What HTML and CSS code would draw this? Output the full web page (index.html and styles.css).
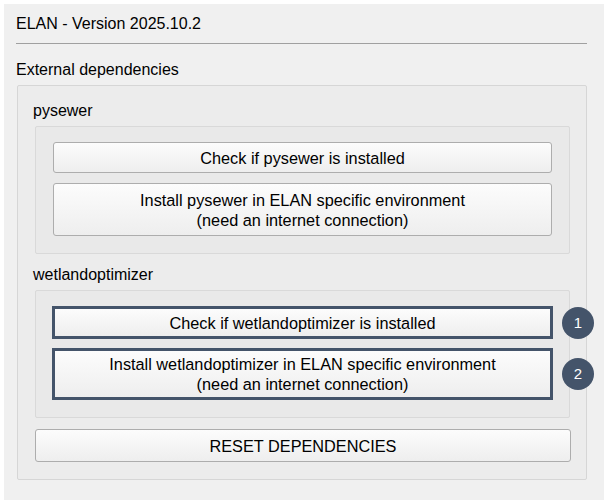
FILE: index.html
```html
<!DOCTYPE html>
<html>
<head>
<meta charset="utf-8">
<link rel="stylesheet" href="styles.css">
</head>
<body>
<div class="frame">
  <div class="title">ELAN - Version 2025.10.2</div>
  <div class="rule"></div>
  <div class="label top-label">External dependencies</div>
  <div class="group">
    <div class="label">pysewer</div>
    <div class="inner">
      <button class="btn single">Check if pysewer is installed</button>
      <button class="btn double">Install pysewer in ELAN specific environment<br>(need an internet connection)</button>
    </div>
    <div class="label sub-label">wetlandoptimizer</div>
    <div class="inner">
      <button class="btn single hl">Check if wetlandoptimizer is installed<span class="badge">1</span></button>
      <button class="btn double hl">Install wetlandoptimizer in ELAN specific environment<br>(need an internet connection)<span class="badge">2</span></button>
    </div>
    <button class="btn single reset">RESET DEPENDENCIES</button>
  </div>
</div>
</body>
</html>
```

FILE: styles.css
```css
html, body {
  margin: 0;
  padding: 0;
  background: #ffffff;
}
body {
  font-family: "Liberation Sans", Arial, sans-serif;
  font-size: 16px;
  color: #000;
}
.frame {
  margin: 4px;
  width: 600px;
  height: 496px;
  box-sizing: border-box;
  background: #f0f0f0;
  padding: 10px 17px 0 12px;
}
.title {
  line-height: 20px;
  height: 20px;
}
.rule {
  margin-top: 9px;
  height: 1px;
  background: #a0a0a0;
}
.label {
  line-height: 20px;
  height: 20px;
}
.top-label {
  margin-top: 16px;
}
.group {
  margin: 5px 0 0 1px;
  border: 1px solid #d6d6d6;
  border-radius: 2px;
  background: #ececec;
  padding: 15px 16px 17px 15px;
}
.inner {
  margin: 5px 0 0 2px;
  border: 1px solid #d9d9d9;
  border-radius: 2px;
  background: #e9e9e9;
  padding: 15px 17px 17px 17px;
  display: flex;
  flex-direction: column;
  gap: 10px;
}
.sub-label {
  margin-top: 11px;
}
.btn {
  position: relative;
  display: block;
  width: 100%;
  box-sizing: border-box;
  font-family: "Liberation Sans", Arial, sans-serif;
  font-size: 16.3px;
  line-height: 20px;
  color: #000;
  border: 1px solid #adadad;
  border-radius: 3px;
  background: linear-gradient(#fcfcfc, #eeeeee);
  padding: 0;
  margin: 0;
  text-align: center;
}
.single {
  height: 31px;
}
.double {
  height: 53px;
}
.hl {
  border: 3px solid #44546a;
  border-radius: 0;
  margin: 0 -1px;
  width: calc(100% + 2px);
}
.hl.single {
  height: 33px;
}
.hl.double {
  height: 52px;
}
.inner .hl + .hl {
  margin-top: -1px;
}
.reset {
  margin: 11px 0 0 2px;
  height: 33px;
  width: 536px;
}
.badge {
  position: absolute;
  left: calc(100% + 12px);
  top: 50%;
  transform: translateY(-50%);
  width: 32px;
  height: 32px;
  border-radius: 50%;
  background: #44546a;
  color: #fff;
  font-size: 15px;
  line-height: 32px;
  text-align: center;
}
```
